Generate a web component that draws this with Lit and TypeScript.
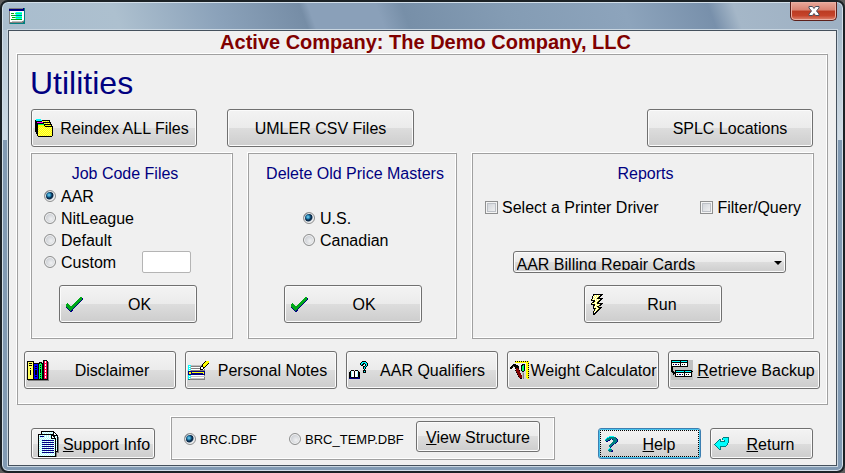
import { LitElement, html, svg, css } from "lit";
import { customElement, state } from "lit/decorators.js";

/* Pixel-art icons: each character is one pixel, looked up in the palette. */
const PALETTE: Record<string, string> = {
  k: "#000000",
  w: "#ffffff",
  y: "#ffff00",
  Y: "#ffff60",
  c: "#00ffff",
  C: "#a8ffff",
  t: "#008080",
  b: "#0000ff",
  n: "#000080",
  g: "#00ff60",
  G: "#00a818",
  m: "#ff00ff",
  r: "#ff0050",
  R: "#800000",
  s: "#c0c0c0",
  d: "#808080",
};

function pixels(rows: string[]) {
  const width = Math.max(...rows.map((r) => r.length));
  const rects: unknown[] = [];
  rows.forEach((row, y) => {
    let x = 0;
    while (x < row.length) {
      const ch = row[x];
      let end = x + 1;
      while (end < row.length && row[end] === ch) end++;
      if (PALETTE[ch]) {
        rects.push(svg`<rect x=${x} y=${y} width=${end - x} height="1" fill=${PALETTE[ch]}></rect>`);
      }
      x = end;
    }
  });
  return html`<svg width=${width} height=${rows.length} viewBox="0 0 ${width} ${rows.length}"
    shape-rendering="crispEdges" aria-hidden="true">${rects}</svg>`;
}

const formIcon = pixels([
  "ddddddddddddddnt",
  "nnnnnnnnnnnnnnnt",
  "nnnnnnnnnnnnnnnt",
  "dwwwwwwwwwwwwwwt",
  "dwwwwwCccccccwwt",
  "dwGGGwgggggggwwt",
  "dwwwwwCccccccwwt",
  "dwGGGGtttttttwwt",
  "dwwwwwCccccccwwt",
  "dwwGGGgggggggwwt",
  "dwwwwwCccccccwwt",
  "dwGGGGGGGGGGGwwt",
  "dwwwwwwwwwwwwwst",
  "dwwssssssssssddt",
  "ddddddddddddddtt",
  "dttttttttttttttt",
]);

const foldersIcon = pixels([
  " ccccc",
  "kcccccckkkkkkkk",
  "kkkkkkkYyYyYyYk",
  "kkmmmmmmkkkkkkkk",
  "kkkkkkkkkYyYyYyk",
  "kkkggggggkkkkkkkk",
  "kkkyyyyyykyyyyyyk",
  "kkkyyyyyyykkkkkkkk",
  "kkkyYyYyYyYyYyYyYk",
  "kkkYyYyYyYyYyYyYyk",
  "kkkyYyYyYyYyYyYyYk",
  "kkkYyYyYyYyYyYyYyk",
  "kkkyYyYyYyYyYyYyYk",
  " kkYyYyYyYyYyYyYyk",
  " kkyYyYyYyYyYyYyYk",
  "  kYyYyYyYyYyYyYyk",
  "  kyYyYyYyYyYyYyYk",
  "   kkkkkkkkkkkkkk",
]);

const checkIcon = pixels([
  "              GG",
  "             GGGn",
  "            GGGGn",
  "           GGGGn",
  "          GGGGn",
  "         GGGGn",
  " G      GGGGn",
  "GGG    GGGGn",
  "GGGG  GGGGn",
  "GGGGGGGGGn",
  "nGGGGGGGn",
  " nGGGGGn",
  "  nGGGn",
  "   nGnn",
  "    nn",
]);

const boltIcon = pixels([
  "  kkkkkkkkkk",
  "  kYwYwYwkk",
  " kwYwYwYkk",
  " kYwYwYkk",
  " kwYwYkkkkkk",
  "kYwYwYwYwkk",
  "kkkkwYwYkk",
  "  kkYwYkk",
  " kkYwYkk",
  "kYwYwYkkkkkk",
  "kkkkYwYwYkk",
  "  kkwYwYkk",
  "  kYwYkk",
  "  kwYwYkkkk",
  "  kkkYwYkk",
  "   kYwYkk",
  "   kwYkk",
  "  kYwkk",
  "  kwkk",
  "  kkk",
  "  kk",
]);

const booksIcon = pixels([
  "                kkkk",
  "kkkkkkk         krwrk",
  "kYYYYYk     kkk krwrkd",
  "kYkkkYkkkkkkkgkkkrrrkd",
  "kYYYYYkbbbbkgggkkrwrkd",
  "kYkkkYkbbbbkgkgkkrwrkd",
  "kYYYYYkbkkbkgggkkrrrkd",
  "kYYYYYkbbbbkgkgkkrwrkd",
  "kYYkYYkbkkbkgggkkrwrkd",
  "kYYYYYkbbbbkgkgkkrrrkd",
  "kYYkYYkbkkbkgkgkkrwrkd",
  "kYYkYYkbkkbkgkgkkrwrkd",
  "kYYkYYkbkkbkgkgkkrrrkd",
  "kYYkYYkbkkbkgggkkrwrkd",
  "kYYkYYkbkkbkgkgkkrwrkd",
  "kYYYYYkbbbbkgggkkrrrkd",
  "kYYYYYkbkkbkgkgkkrwrkd",
  "kYYYYYkbbbbkgggkkrwrkd",
  "kYYYYYkbbbbkgkgkkrrrkd",
  "kkkkkkkkkkkkkkkkkkkkkd",
  " ddddddddddddddddddddd",
]);

const notesIcon = pixels([
  "                 kyyy",
  "                kyyyy",
  "               kyyyyk",
  "              kyyyyk",
  "cccssssssssssdkyyyk",
  "cwsddddddddddkkyyk",
  "cccwwwwwwwwwkwwkk",
  "cwsdddddddddkwwk",
  "cccwwwwwwwwwkkkwd",
  "cwsdddddddddddddd",
  "nnnnnnnnnnnnnnnnn",
  "nyynyyyyyyyyyyyyn",
  "nyynnnnnnnnnnnnyn",
  "nnnnnnnnnnnnnnnnn",
  "cccwwwwwwwwwwwwwd",
  "cwsssssssssssssss",
  "cccwwwwwwwwwwwwwd",
  "cwssssssssssssssd",
  "ttddddddddddddddd",
]);

const qualifierIcon = pixels([
  "             kkkk",
  "            kcccck",
  "           kcckkcck",
  "           kckk kck",
  "            kk  kck",
  "              kkck",
  "              kck",
  "              kck",
  "               k",
  "  kkk kkk     kkk",
  " kCwwkwwCk    kck",
  "kkCwwkwwCkk   kkk",
  "kkCwwkwwCkk",
  "kkCwwkwwCkk",
  "kkCwwkwwCkk",
  "kkCwwkwwCkk",
  "knkkkkkkknk",
  "nnnnnnnnnnn",
]);

const toolsIcon = pixels([
  "     kykykykykykyky",
  "     yyyyyyyyyyyyyy",
  "                yyk",
  "   kkk      kkk yyy",
  "  kkkkkk   kkgk yyk",
  " kkdkkkkk  kggk yyy",
  "kkk  kkkk  kggk yyk",
  "kk   kRRk  kggk yyy",
  "      RRR  kggk yyk",
  "     kRRRk kggk yyy",
  "      RRRR  kk  yyk",
  "      kRRR  ss  yyy",
  "       RRRR sd  yyk",
  "       kRRR sd  yyy",
  "        RRRRsd  yyk",
  "        kRRRsd  yyy",
  "         RRRsd  yyk",
  "          kk d   yy",
]);

const backupIcon = pixels([
  "kkkkkkkkkkkkkkkkksssss",
  "kcccccccckccccccksssss",
  "kkkkkkkkkkkkkkkkksssss",
  "kwwwwwwwwkwwwwwwksssss",
  "kwkwnnwkwkwkwkwwksssss",
  "kwwwwwwwwkwwwwwwksssss",
  "kkkkkkkkkkkkkkkkksssss",
  "kkssssssssssssssssssss",
  "kkssssssssssssssssssss",
  "kkssssssssssssssssssss",
  "kksskkkkkkkkkkkkkkkkks",
  "kkkskcccccccckcccccckk",
  "skkkkkkkkkkkkkkkkkkkks",
  "sskkkwwwwwwwwkwwwwwwks",
  "sskskwkwnnwkwkwkwkwwks",
  "sssskwwwwwwwwkwwwwwwks",
  "sssskkkkkkkkkkkkkkkkks",
  "ssssssssssssssssssssss",
  "ssssssssssssssssssssss",
  "ssssssssssssssssssssss",
]);

const supportIcon = pixels([
  "   kkkkkkkkkkkkk",
  "   kwCwCwCwCwCwkk",
  "   kCwCwCwCwCwCkwk",
  "kkkkkkkkkkkkkkkkwwk",
  "kwCwCwCwCwCwCkkkkkkk",
  "kCnnnnCwCwCwCkwkkCwk",
  "kwCwCwCwCwCwCkwwkwCkd",
  "kCwCwCwCwCwCwkkkkkwkd",
  "kwCwCwCwCwCwCwCwCkCkd",
  "kCwCnnnnnnnnnnnnwkwkd",
  "kwCwCwCwCwCwCwCwCkCkd",
  "kCwCnnnnnnnnnnnnwkwkd",
  "kwCwCwCwCwCwCwCwCkCkd",
  "kCwCnnnnnnnnnnnnwkwkd",
  "kwCwCwCwCwCwCwCwCkCkd",
  "kCwCnnnnnnnnnnnnwkwkd",
  "kwCwCwCwCwCwCwCwCkCkd",
  "kCwCnnnnnnnnnnnnwkwkd",
  "kwCwCwCwCwCwCwCwCkCkd",
  "kCwCnnnnnnnnnnnnwkwkd",
  "kwCwCwCwCwCwCwCwCkkkd",
  "kCwCnnnnnnnnnnnnwkddd",
  "kwCwCwCwCwCwCwCwCkd",
  "kCwCwCwCwCwCwCwCwkd",
  "kwCwCwCwCwCwCwCwCkd",
  "kkkkkkkkkkkkkkkkkkd",
]);

const helpIcon = pixels([
  "    ccccc",
  "  ccttttttt",
  " ctttttttttn",
  "cttttn nttttn",
  "tttnn   ttttn",
  " nn     ttttn",
  "       ttttn",
  "      ttttn",
  "     tttn",
  "    tttn",
  "    ttn",
  "     n",
  "    cc",
  "   cttt",
  "   ttttn",
  "    ttnn",
]);

const returnIcon = pixels([
  "         tttttt",
  "        tccccct",
  "     tt tccccct",
  "    tct   tccct",
  "   tcctttttccct",
  "  tccccccccccct",
  " tccccccccccct",
  "tcccccccccccct",
  " tcccccccccct",
  "  tccctttttt",
  "   tcct",
  "    tct",
  "     tt",
]);

@customElement("app-root")
export class AppRoot extends LitElement {
  @state() private reports = ["AAR Billing Repair Cards"];

  static styles = css`
    :host {
      display: block;
      background: #5c5c5c;
      color: #000;
      font: 16px/22px "Liberation Sans", Arial, sans-serif;
    }
    * {
      box-sizing: border-box;
    }
    svg {
      display: block;
      flex: none;
    }
    .window {
      display: flex;
      flex-direction: column;
      min-height: 100vh;
      padding: 0 6px 5px;
      border: 2px solid #1c2226;
      border-radius: 8px;
      box-shadow: inset 0 0 0 1px #d3dfe9;
      background:
        linear-gradient(#b4c6d5 0, #d3dfe9 136px, transparent 136px) 0 28px / 6px 110px no-repeat,
        linear-gradient(#a8bccb 0, #dce5ec 136px, transparent 136px) 100% 28px / 6px 110px no-repeat,
        linear-gradient(70deg, #a9bdce 0, #adc0cf 14%, #8ba2ba 26%, #768da6 36%, #8aa0b9 37%, #8aa0b9 45%, #778fa8 48%, #849cb4 60%, #8da4bc 74%, #7890ab 84%, #a5b7c8 87%, #9db0c3 100%) 0 0 / 100% 28px no-repeat,
        #819ab3;
    }
    .titlebar {
      display: flex;
      justify-content: space-between;
      align-items: flex-start;
      height: 28px;
    }
    .titlebar svg {
      margin: 6px 0 0 1px;
    }
    .close {
      display: flex;
      justify-content: center;
      width: 47px;
      height: 19px;
      padding: 0;
      border: 1px solid #5c1f1a;
      border-top: 0;
      border-radius: 0 0 5px 5px;
      box-shadow: inset 0 0 0 1px #eab0a4;
      background: linear-gradient(#e9a99b 0, #d98271 45%, #bb3b22 50%, #c5432a 75%, #dd8672 100%);
    }
    .close svg {
      margin: 4px 0 0;
    }
    .client {
      flex: 1;
      padding: 0 8px 5px;
      border: 1px solid #45515d;
      box-shadow: 0 0 0 1px #c9d6e1;
      background: #f0f0f0;
    }
    h1 {
      margin: 0;
      padding-left: 6px;
      color: #800000;
      font-size: 20px;
      line-height: 23px;
      text-align: center;
    }
    h2 {
      margin: 0;
      padding: 0 6px;
      color: #000080;
      font-size: 32px;
      font-weight: 400;
      line-height: 56px;
      height: 54px;
    }
    .box {
      min-width: 0;
      margin: 0;
      border: 1px solid #a0a0a0;
      box-shadow: -1px -1px 0 #fff, inset -1px -1px 0 #fff;
    }
    .main {
      padding: 0 7px 15px 6px;
    }
    .top {
      display: flex;
      padding: 0 7px;
      gap: 30px;
    }
    .btn {
      display: flex;
      align-items: center;
      height: 38px;
      padding: 0;
      border: 1px solid #707070;
      border-radius: 3px;
      box-shadow: inset 0 0 0 1px #fbfbfb;
      background: linear-gradient(#f3f3f3 0, #ebebeb 50%, #dddddd 50%, #cdcdcd 100%);
      color: inherit;
      font: inherit;
      white-space: nowrap;
    }
    .btn span {
      flex: 1;
      padding-top: 2px;
      text-align: center;
    }
    .btn svg {
      margin-left: 3px;
    }
    .w166 {
      width: 166px;
    }
    .w187 {
      width: 187px;
    }
    .w138 {
      width: 138px;
    }
    .w124 {
      width: 124px;
    }
    .w103 {
      width: 103px;
    }
    .short {
      flex: none;
      height: 31px;
    }
    .push {
      margin-left: auto;
    }
    .btn.inset svg {
      margin-left: 6px;
    }
    .focus {
      border-color: #3c7fb1;
      box-shadow: inset 0 0 0 1px #48c4ee;
      outline: 1px dotted #000;
      outline-offset: -3px;
    }
    .groups {
      display: grid;
      grid-template-columns: 202fr 209fr 342fr;
      gap: 15px;
      padding: 6px 6px 12px 7px;
    }
    .group {
      display: flex;
      flex-direction: column;
      padding: 9px 12px 15px;
    }
    h3 {
      margin: 0;
      color: #000080;
      font-size: 16px;
      font-weight: 400;
      text-align: center;
      white-space: nowrap;
    }
    .job h3 {
      padding-right: 14px;
    }
    .delete h3,
    .reports h3 {
      padding-left: 5px;
    }
    .row {
      display: flex;
      align-items: center;
      justify-content: space-between;
      height: 22px;
    }
    label {
      display: flex;
      align-items: center;
      gap: 5px;
      white-space: nowrap;
    }
    label span {
      padding-top: 2px;
    }
    input[type="radio"] {
      appearance: none;
      flex: none;
      width: 12px;
      height: 12px;
      margin: 0;
      border: 1px solid #8e8f8f;
      border-radius: 50%;
      box-shadow: inset 0 0 0 1px #f4f4f4;
      background: radial-gradient(circle at 60% 60%, #f0f1f2 0, #cfd2d7 5px);
    }
    input[type="radio"]:checked {
      background: radial-gradient(circle at 4px 4px, #7fd6f5 0, #1a78a8 2px, #0b2c4c 3px, #0b2c4c 4px, #dfe2e6 5px);
    }
    input[type="checkbox"] {
      appearance: none;
      flex: none;
      width: 13px;
      height: 13px;
      margin: 0;
      border: 1px solid #8e8f8f;
      box-shadow: inset 0 0 0 1px #f4f4f4, inset 0 0 0 2px #bcc0c6;
      background: linear-gradient(135deg, #cbcfd5, #f6f6f6);
    }
    .custom {
      width: 49px;
      height: 22px;
      margin-right: 29px;
      padding: 0 3px;
      border: 1px solid #b4b4b4;
      border-radius: 2px;
      background: #fff;
      font: inherit;
    }
    .group .btn {
      margin-top: auto;
    }
    .job .btn {
      margin-left: 15px;
    }
    .delete .btn {
      align-self: center;
    }
    .delete .choices {
      margin: 22px 0 0 42px;
    }
    .checks {
      margin-top: 11px;
    }
    .checks label {
      gap: 4px;
    }
    .picker {
      position: relative;
      align-self: center;
      width: 273px;
      margin: 33px 0 12px 12px;
    }
    .picker svg {
      position: absolute;
      top: 10px;
      right: 4px;
      pointer-events: none;
    }
    select {
      display: block;
      appearance: none;
      width: 100%;
      height: 22px;
      padding: 2px 16px 2px 3px;
      border: 1px solid #707070;
      border-radius: 3px;
      box-shadow: inset 0 0 0 1px #fbfbfb;
      background: linear-gradient(#f3f3f3 0, #ebebeb 50%, #dddddd 50%, #cdcdcd 100%);
      color: inherit;
      font: inherit;
    }
    .reports .btn {
      align-self: center;
      margin-left: 20px;
    }
    .tools {
      display: grid;
      grid-template-columns: repeat(5, 1fr);
      gap: 9px;
    }
    .tools .btn svg {
      margin-left: 2px;
    }
    .footer {
      display: flex;
      align-items: flex-end;
      gap: 9px;
      padding: 12px 15px 0 14px;
    }
    .footer > .btn {
      margin-bottom: 1px;
    }
    .files {
      display: flex;
      align-items: flex-start;
      justify-content: space-between;
      width: 384px;
      height: 43px;
      margin-left: 7px;
      padding: 3px 14px 0 12px;
    }
    .tables {
      display: flex;
      gap: 32px;
    }
    .files label {
      gap: 4px;
      height: 36px;
      font-size: 13px;
    }
  `;

  private radio(name: string, text: string, checked = false) {
    return html`<label><input type="radio" name=${name} ?checked=${checked} /><span>${text}</span></label>`;
  }

  render() {
    return html`
      <div class="window">
        <div class="titlebar">
          ${formIcon}
          <button class="close" aria-label="Close">
            <svg width="12" height="10" viewBox="0 0 12 10">
              <path d="M1 .5h3.500L6 2.500 7.500 .5H11v1.500L8.500 5 11 8v1.500H7.500L6 7.500 4.500 9.500H1V8L3.500 5 1 2z"
                fill="#fff" stroke="#4a4f5e" stroke-width="1"></path>
            </svg>
          </button>
        </div>
        <div class="client">
          <h1>Active Company: The Demo Company, LLC</h1>
          <main class="box main">
            <h2>Utilities</h2>
            <div class="top">
              <button class="btn w166">${foldersIcon}<span>Reindex ALL Files</span></button>
              <button class="btn w187"><span>UMLER CSV Files</span></button>
              <button class="btn w166 push"><span>SPLC Locations</span></button>
            </div>
            <div class="groups">
              <section class="box group job">
                <h3>Job Code Files</h3>
                <div class="row">${this.radio("job", "AAR", true)}</div>
                <div class="row">${this.radio("job", "NitLeague")}</div>
                <div class="row">${this.radio("job", "Default")}</div>
                <div class="row">
                  ${this.radio("job", "Custom")}
                  <input class="custom" type="text" aria-label="Custom job code" />
                </div>
                <button class="btn w138 inset">${checkIcon}<span>OK</span></button>
              </section>
              <section class="box group delete">
                <h3>Delete Old Price Masters</h3>
                <div class="choices">
                  <div class="row">${this.radio("price", "U.S.", true)}</div>
                  <div class="row">${this.radio("price", "Canadian")}</div>
                </div>
                <button class="btn w138 inset">${checkIcon}<span>OK</span></button>
              </section>
              <section class="box group reports">
                <h3>Reports</h3>
                <div class="row checks">
                  <label><input type="checkbox" /><span>Select a Printer Driver</span></label>
                  <label><input type="checkbox" /><span>Filter/Query</span></label>
                </div>
                <div class="picker">
                  <select aria-label="Report">
                    ${this.reports.map((r) => html`<option>${r}</option>`)}
                  </select>
                  <svg width="8" height="4" viewBox="0 0 8 4"><path d="M0 0h8L4 4z"></path></svg>
                </div>
                <button class="btn w138 inset">${boltIcon}<span>Run</span></button>
              </section>
            </div>
            <div class="tools">
              <button class="btn">${booksIcon}<span>Disclaimer</span></button>
              <button class="btn">${notesIcon}<span>Personal Notes</span></button>
              <button class="btn">${qualifierIcon}<span>AAR Qualifiers</span></button>
              <button class="btn">${toolsIcon}<span>Weight Calculator</span></button>
              <button class="btn">${backupIcon}<span><u>R</u>etrieve Backup</span></button>
            </div>
          </main>
          <div class="footer">
            <button class="btn short w124 inset">${supportIcon}<span><u>S</u>upport Info</span></button>
            <div class="box files">
              <div class="tables">
                ${this.radio("file", "BRC.DBF", true)}
                ${this.radio("file", "BRC_TEMP.DBF")}
              </div>
              <button class="btn short w124"><span><u>V</u>iew Structure</span></button>
            </div>
            <button class="btn short w103 push inset focus">${helpIcon}<span><u>H</u>elp</span></button>
            <button class="btn short w103">${returnIcon}<span><u>R</u>eturn</span></button>
          </div>
        </div>
      </div>
    `;
  }
}
